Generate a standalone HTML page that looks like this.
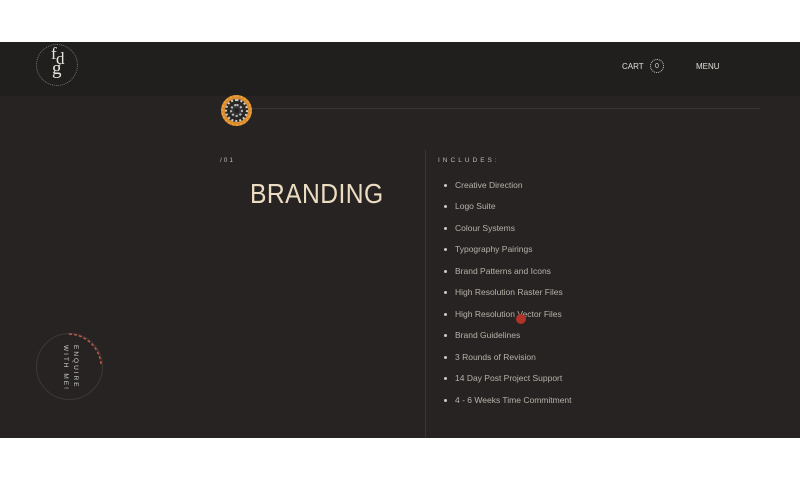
<!DOCTYPE html>
<html><head><style>
*{margin:0;padding:0;box-sizing:border-box}
body{width:800px;height:480px;background:#fff;position:relative;overflow:hidden;font-family:"Liberation Sans",sans-serif}
.dark{position:absolute;left:0;top:42px;width:800px;height:396px;background:#262322}
.hdr{position:absolute;left:0;top:42px;width:800px;height:54px;background:#211f1e}
.t{position:absolute;white-space:nowrap}
.li{position:absolute;left:444px;font-size:8.5px;color:#b8b1a9;white-space:nowrap}
.li:before{content:"";position:absolute;left:0;top:4px;width:3px;height:3px;border-radius:50%;background:#cfc8bf}
.li span{margin-left:11px}
</style></head><body>
<div class="dark"></div>
<div class="hdr"></div>
<!-- logo -->
<div style="position:absolute;left:36px;top:44px;width:42px;height:42px;border:1px dotted #777;border-radius:50%"></div>
<div class="t" style="left:51px;top:47px;font-family:'Liberation Serif',serif;font-size:17px;color:#e8e4de;line-height:13px">f</div>
<div class="t" style="left:56px;top:52px;font-family:'Liberation Serif',serif;font-size:17px;color:#e8e4de;line-height:13px">d</div>
<div class="t" style="left:52px;top:62px;font-family:'Liberation Serif',serif;font-size:19px;color:#e8e4de;line-height:14px">g</div>
<div class="t" style="left:622px;top:62px;font-size:8px;color:#e0dcd6">CART</div>
<div style="position:absolute;left:650px;top:59px;width:14px;height:14px;border:1px dotted #ccc;border-radius:50%;font-size:7px;color:#ddd;text-align:center;line-height:13px">0</div>
<div class="t" style="left:696px;top:62px;font-size:8px;color:#e0dcd6">MENU</div>
<!-- line + target -->
<div style="position:absolute;left:252px;top:108px;width:508px;height:1px;background:#3a3634"></div>
<div style="position:absolute;left:221px;top:95px;width:31px;height:31px;border-radius:50%;background:#d88c2c;border:2px dotted #f0a040"></div>
<div style="position:absolute;left:225px;top:99px;width:23px;height:23px;border-radius:50%;background:#2a2624;border:2px dotted #ccc"></div>
<div style="position:absolute;left:230px;top:104px;width:13px;height:13px;border-radius:50%;border:2px dotted #bbb;background:#333"></div>
<div style="position:absolute;left:234px;top:108px;width:5px;height:5px;border-radius:50%;background:#222"></div>
<div style="position:absolute;left:425px;top:150px;width:1px;height:288px;background:#3a3634"></div>
<div class="t" style="left:220px;top:157px;font-size:6.5px;letter-spacing:2px;color:#bbb">/01</div>
<div class="t" style="left:250px;top:178px;font-size:28px;color:#ecdcc2;letter-spacing:0.5px;transform:scaleX(0.88);transform-origin:left">BRANDING</div>
<div class="t" style="left:438px;top:157px;font-size:6.5px;letter-spacing:3px;color:#bbb">INCLUDES:</div>
<div class="li" style="top:180px"><span>Creative Direction</span></div>
<div class="li" style="top:201px"><span>Logo Suite</span></div>
<div class="li" style="top:223px"><span>Colour Systems</span></div>
<div class="li" style="top:244px"><span>Typography Pairings</span></div>
<div class="li" style="top:266px"><span>Brand Patterns and Icons</span></div>
<div class="li" style="top:287px"><span>High Resolution Raster Files</span></div>
<div class="li" style="top:309px"><span>High Resolution Vector Files</span></div>
<div class="li" style="top:330px"><span>Brand Guidelines</span></div>
<div class="li" style="top:352px"><span>3 Rounds of Revision</span></div>
<div class="li" style="top:373px"><span>14 Day Post Project Support</span></div>
<div class="li" style="top:395px"><span>4 - 6 Weeks Time Commitment</span></div>
<div style="position:absolute;left:516px;top:314px;width:10px;height:10px;border-radius:50%;background:#b0332a"></div>
<!-- enquire -->
<div style="position:absolute;left:36px;top:333px;width:67px;height:67px;border:1px solid #3c3836;border-radius:50%"></div>
<svg style="position:absolute;left:36px;top:333px" width="67" height="67"><path d="M33 1 A33 33 0 0 1 65 31" fill="none" stroke="#c0584a" stroke-width="1.5" stroke-dasharray="3 2"/></svg>
<div class="t" style="left:60px;top:345px;font-size:6.5px;letter-spacing:2px;color:#ccc;writing-mode:vertical-rl;line-height:10px">ENQUIRE<br>WITH ME!</div>
</body></html>
